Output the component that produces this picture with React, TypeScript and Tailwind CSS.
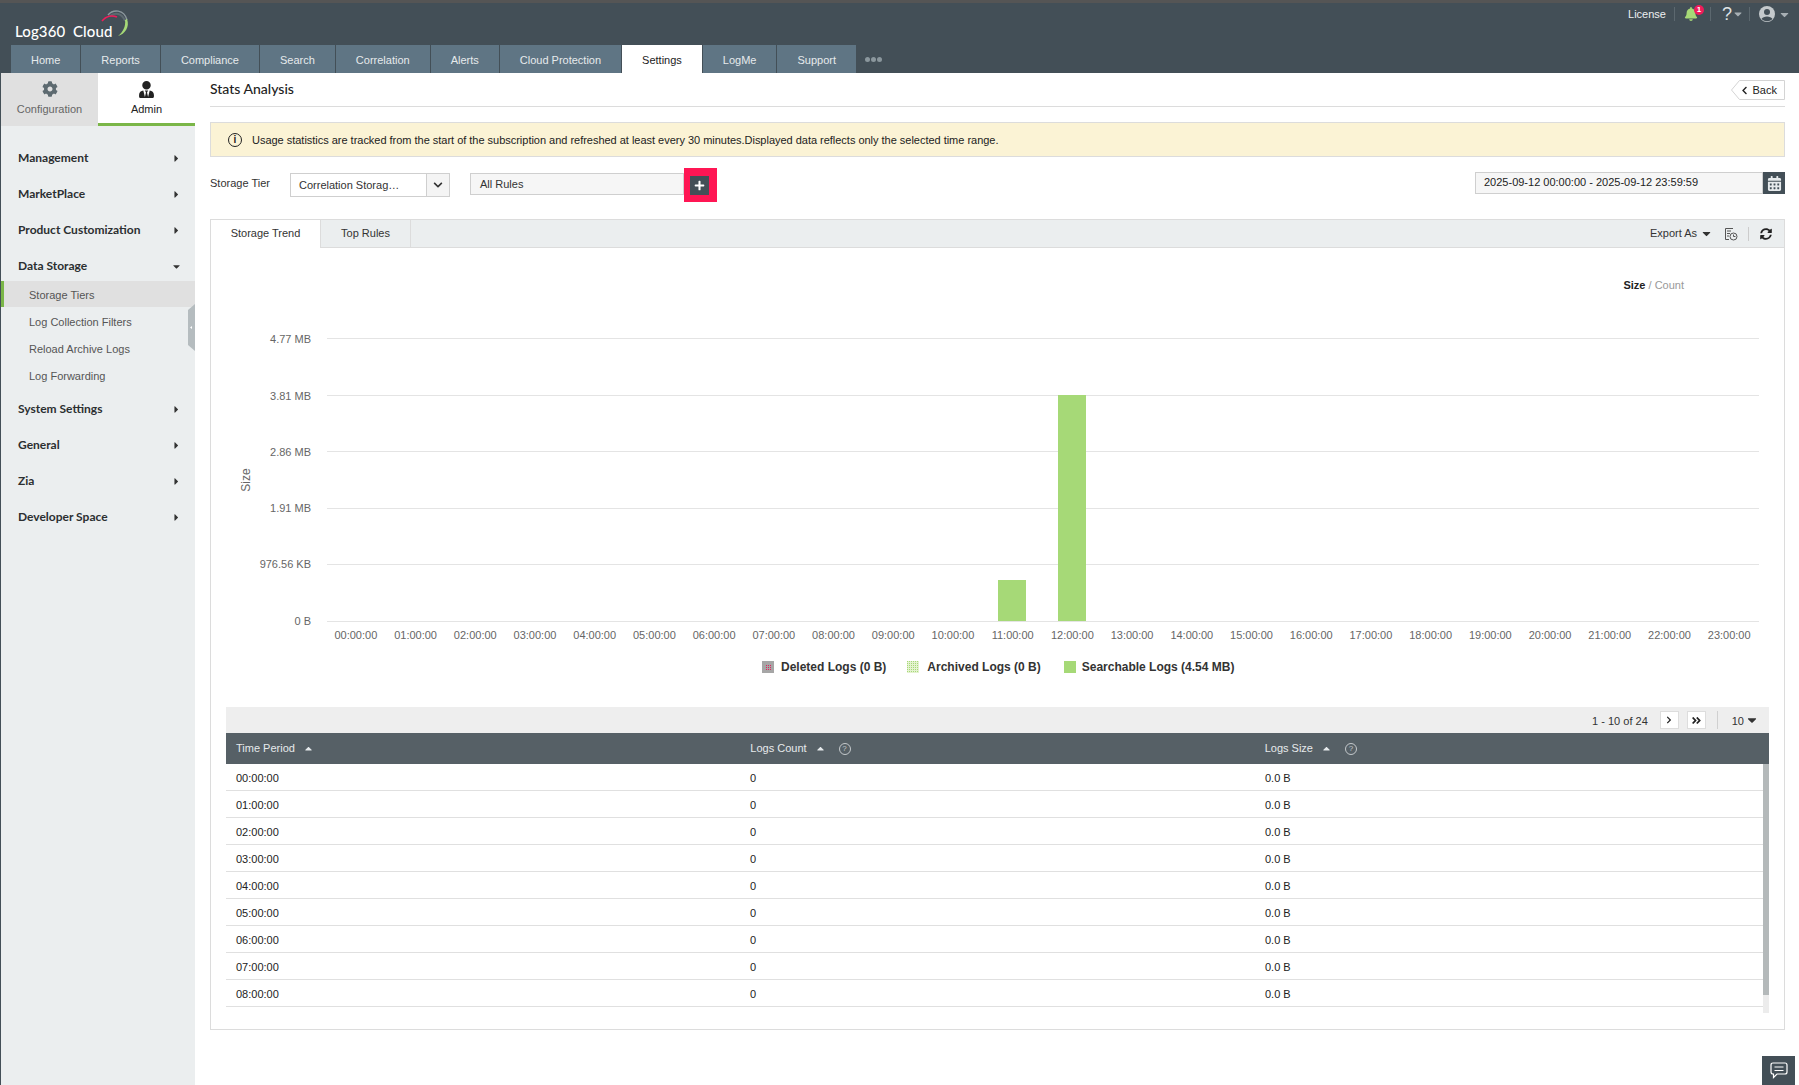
import { FaCog, FaUserTie, FaBell, FaCaretDown, FaCaretRight, FaCaretUp, FaChevronDown, FaChevronLeft, FaChevronRight, FaAngleDoubleRight, FaCalendarAlt, FaSyncAlt, FaPlus } from "react-icons/fa";

const tabs = ["Home", "Reports", "Compliance", "Search", "Correlation", "Alerts", "Cloud Protection", "Settings", "LogMe", "Support"];
const hours = Array.from({ length: 24 }, (_, i) => String(i).padStart(2, "0") + ":00:00");
const yTicks = [
  { label: "0 B", y: 329.5, dy: 3.5 },
  { label: "976.56 KB", y: 272.5, dy: 3.5 },
  { label: "1.91 MB", y: 216.5, dy: 3.5 },
  { label: "2.86 MB", y: 159.5, dy: 4.5 },
  { label: "3.81 MB", y: 103.5, dy: 4.5 },
  { label: "4.77 MB", y: 46.5, dy: 4.5 },
];
const bars = [
  { hour: 11, top: 288 },
  { hour: 12, top: 103 },
];

function NavHead({ label, open }: { label: string; open?: boolean }) {
  return (
    <div className="flex h-[36px] items-center justify-between pl-[17px] pr-[13px] text-[12px] font-bold text-[#2b2f31]">
      <span>{label}</span>
      {open ? <FaCaretDown className="text-[11px] text-[#333]" /> : <FaCaretRight className="text-[11px] text-[#333]" />}
    </div>
  );
}

function NavSub({ label, active }: { label: string; active?: boolean }) {
  return (
    <div className={"flex items-center text-[11px] text-[#555] font-['Liberation_Sans'] " + (active ? "mb-[2px] h-[26px] border-l-[3px] border-[#7ab648] bg-[#e0e0e0] pl-[25px] pt-[2px]" : "h-[27px] pl-[28px]")}>
      {label}
    </div>
  );
}

function Chart() {
  return (
    <svg width="1543" height="358" className="block font-['Liberation_Sans']">
      {yTicks.map((t) => (
        <g key={t.label}>
          <line x1="101" x2="1533" y1={t.y} y2={t.y} stroke="#e4e4e4" />
          <text x="85" y={t.y + t.dy} textAnchor="end" fontSize="11" fill="#666">{t.label}</text>
        </g>
      ))}
      <text x="24" y="188" fontSize="12" fill="#666" textAnchor="middle" transform="rotate(-90 24 188)">Size</text>
      {hours.map((h, i) => (
        <text key={h} x={100 + 59.71 * (i + 0.5)} y="347" fontSize="11" fill="#666" textAnchor="middle">{h}</text>
      ))}
      {bars.map((b) => (
        <rect key={b.hour} x={Math.round(100 + 59.67 * (b.hour + 0.5) - 14)} y={b.top} width="28" height={329 - b.top} fill="#a6d977" />
      ))}
    </svg>
  );
}

function Swatch({ kind }: { kind: "deleted" | "archived" | "searchable" }) {
  const id = "sw-" + kind;
  return (
    <svg width="12" height="12" className="block">
      {kind === "searchable" && <rect width="12" height="12" fill="#a6d977" />}
      {kind === "deleted" && (
        <>
          <rect width="12" height="12" fill="#a6a6a6" />
          <defs>
            <pattern id={id} width="2" height="2" patternUnits="userSpaceOnUse">
              <rect width="1" height="1" fill="#e0245e" />
            </pattern>
          </defs>
          <rect x="3" y="3" width="6" height="6" fill={`url(#${id})`} />
        </>
      )}
      {kind === "archived" && (
        <>
          <defs>
            <pattern id={id} width="2" height="2" patternUnits="userSpaceOnUse">
              <rect width="2" height="2" fill="#e4f2d0" />
              <rect width="1" height="1" fill="#a6d977" />
            </pattern>
          </defs>
          <rect width="12" height="12" fill={`url(#${id})`} />
        </>
      )}
    </svg>
  );
}

function Help() {
  return (
    <span className="flex h-[12px] w-[12px] items-center justify-center rounded-full border border-[#c4c9cc] text-[8px] text-[#c4c9cc]">?</span>
  );
}

export default function App() {
  return (
    <div className="flex h-screen w-full flex-col overflow-hidden bg-white font-['Liberation_Sans',sans-serif] text-[11px] text-[#333]">
      {/* Header */}
      <header className="relative h-[73px] shrink-0 border-t-[3px] border-[#555] bg-[#434f57]">
        <div className="flex h-[42px] items-start justify-between">
          <div className="relative ml-[15px] mt-[20px] flex items-center">
            <span className="font-['Lato'] text-[15px] font-medium leading-[16px] tracking-[0.1px] text-white">Log360&nbsp; Cloud</span>
            <svg width="30" height="30" viewBox="0 0 30 30" fill="none" className="absolute left-[85px] top-[-15px]">
              <path d="M8 7C13 1 24 1 27 12" stroke="#8b979d" strokeWidth="1.5" />
              <path d="M10 8C15 4 22 5 25 13" stroke="#5d6a70" strokeWidth="2" />
              <path d="M2 13C6 8 12 7 17 9" stroke="#ef1c5a" strokeWidth="1.6" />
              <path d="M27 11C30 19 25 26 18 28C23 24 26 18 25 12Z" fill="#a6d977" />
            </svg>
          </div>
          <div className="mt-[2px] flex items-center pr-[8px] text-[#eef0f1]">
            <span className="pr-[8px] text-[11px]">License</span>
            <span className="h-[14px] w-px bg-[#5c686f]" />
            <span className="relative ml-[10px] mr-[13px] flex w-[12px] justify-center">
              <FaBell className="shrink-0 text-[14px] text-[#a6d977]" />
              <span className="absolute left-[9px] top-[-2px] flex h-[10px] w-[10px] items-center justify-center rounded-full bg-[#ef1c5a] text-[8px] font-bold leading-none text-white">1</span>
            </span>
            <span className="h-[14px] w-px bg-[#5c686f]" />
            <span className="ml-[11px] flex items-center pr-[5px] text-[#dfe3e5]">
              <span className="text-[18px] leading-none">?</span>
              <FaCaretDown className="text-[12px] text-[#a7afb4]" />
            </span>
            <span className="h-[14px] w-px bg-[#5c686f]" />
            <span className="ml-[9px] flex items-center gap-[3px]">
              <svg width="16" height="16" viewBox="0 0 16 16">
                <circle cx="8" cy="8" r="8" fill="#c4c9cc" />
                <circle cx="8" cy="6" r="3" fill="#434f57" />
                <path d="M2.5 13C4 9.5 12 9.5 13.5 13C10 16 6 16 2.5 13Z" fill="#434f57" />
              </svg>
              <FaCaretDown className="text-[13px] text-[#a7afb4]" />
            </span>
          </div>
        </div>
        <nav className="flex h-[28px] items-stretch gap-px pl-[11px]">
          {tabs.map((t) => (
            <div key={t} className={"flex items-center px-5 pt-[2px] text-[11px] " + (t === "Settings" ? "bg-white text-[#222]" : "bg-[#5f7584] text-[#e6eaec]")}>{t}</div>
          ))}
          <div className="ml-[8px] flex items-center gap-[1px]">
            <span className="h-[5px] w-[5px] rounded-full bg-[#8b979d]" />
            <span className="h-[5px] w-[5px] rounded-full bg-[#8b979d]" />
            <span className="h-[5px] w-[5px] rounded-full bg-[#8b979d]" />
          </div>
        </nav>
      </header>

      <div className="flex min-h-0 flex-1">
        {/* Sidebar */}
        <aside className="relative w-[195px] shrink-0 border-l border-[#434f57] bg-[#ebeeef] font-['Lato']">
          <div className="flex h-[53px] bg-white font-['Liberation_Sans']">
            <div className="flex w-[97px] flex-col items-center bg-[#e0e0e0] pt-[8px] text-[#666]">
              <FaCog className="text-[16px] text-[#5d6a70]" />
              <span className="mt-[4px] text-[11px]">Configuration</span>
            </div>
            <div className="flex w-[97px] flex-col items-center border-b-[3px] border-[#7ab648] pt-[8px] text-[#222]">
              <FaUserTie className="text-[17px] text-[#222]" />
              <span className="mt-[3px] text-[11px]">Admin</span>
            </div>
          </div>
          <div className="pt-[14px]">
            <NavHead label="Management" />
            <NavHead label="MarketPlace" />
            <NavHead label="Product Customization" />
            <NavHead label="Data Storage" open />
            <div className="mt-[-3px] pb-[1px]">
              <NavSub label="Storage Tiers" active />
              <NavSub label="Log Collection Filters" />
              <NavSub label="Reload Archive Logs" />
              <NavSub label="Log Forwarding" />
            </div>
            <NavHead label="System Settings" />
            <NavHead label="General" />
            <NavHead label="Zia" />
            <NavHead label="Developer Space" />
          </div>
          <svg width="7" height="47" className="absolute right-0 top-[231px]">
            <path d="M7 0L0 6V41L7 47Z" fill="#b5bcbf" />
            <path d="M4 22L2 23.5L4 25Z" fill="#fff" />
          </svg>
        </aside>

        {/* Main */}
        <main className="relative min-w-0 flex-1 pl-[15px] pr-[14px]">
          <div className="flex h-[34px] items-center justify-between border-b border-[#dcdcdc]">
            <h1 className="pb-[3px] font-['Lato'] text-[14px] font-medium text-[#222]">Stats Analysis</h1>
            <div className="relative flex h-[20px] w-[54px] items-center justify-end gap-[4px] pr-[8px] pt-[1px] text-[11px] text-[#222]">
              <svg width="54" height="20" className="absolute left-0 top-0">
                <path d="M8.5 .5H53.5V19.5H8.5L.5 10Z" fill="#fff" stroke="#d4d4d4" />
              </svg>
              <FaChevronLeft className="relative text-[9px]" />
              <span className="relative">Back</span>
            </div>
          </div>

          <div className="mt-[15px] flex h-[35px] items-center border border-[#dcdcdc] bg-[#fbf3d5] pl-[17px] text-[11px] text-[#222]">
            <span className="flex h-[14px] w-[14px] items-center justify-center rounded-full border border-[#222] text-[10px] font-bold leading-none">i</span>
            <span className="ml-[10px] pt-[2px] tracking-[-0.02px]">Usage statistics are tracked from the start of the subscription and refreshed at least every 30 minutes.Displayed data reflects only the selected time range.</span>
          </div>

          <div className="mt-[11px] flex h-[34px] items-center">
            <span className="w-[80px] pb-[3px] text-[11px] text-[#333]">Storage Tier</span>
            <div className="flex h-[24px] w-[160px] items-center justify-between border border-[#cfcfcf] pl-[8px]">
              <span className="text-[11px] text-[#333]">Correlation Storag…</span>
              <span className="flex h-full w-[23px] items-center justify-center border-l border-[#cfcfcf] bg-[#f4f4f4]"><FaChevronDown className="text-[10px] text-[#333]" /></span>
            </div>
            <div className="mb-[2px] ml-[20px] flex h-[22px] w-[214px] items-center border border-[#cfcfcf] bg-[#f6f6f6] pl-[9px] text-[11px] text-[#333]">All Rules</div>
            <div className="flex h-[34px] w-[33px] items-center bg-[#ff1654] pl-[6px]">
              <span className="flex h-[19px] w-[19px] items-center justify-center bg-[#434f57] text-white"><FaPlus className="text-[11px]" /></span>
            </div>
            <div className="mb-[4px] ml-auto flex h-[22px] w-[310px] items-stretch">
              <span className="flex flex-1 items-center border border-[#cfcfcf] bg-[#f6f6f6] pb-[2px] pl-[8px] text-[11px] text-[#222]">2025-09-12 00:00:00 - 2025-09-12 23:59:59</span>
              <span className="flex w-[22px] items-center justify-center bg-[#434f57] text-[#e6eaec]"><FaCalendarAlt className="text-[15px]" /></span>
            </div>
          </div>

          <section className="mt-[17px] h-[811px] border border-[#dcdcdc]">
            <div className="flex h-[28px] items-stretch border-b border-[#dcdcdc] bg-[#ebeeef] text-[11px] text-[#333]">
              <div className="mb-[-1px] flex w-[110px] items-center justify-center border-r border-[#dcdcdc] bg-white pb-[2px]">Storage Trend</div>
              <div className="flex w-[90px] items-center justify-center border-r border-[#dcdcdc]">Top Rules</div>
              <div className="ml-auto flex items-center pr-[12px]">
                <span>Export As</span>
                <FaCaretDown className="ml-[3px] text-[13px]" />
                <svg width="14" height="14" viewBox="0 0 14 14" fill="none" stroke="#555" className="ml-[11px]">
                  <path d="M9 1.5H1.5V12.5H5M3 4H7M3 6.5H6M3 9H5" />
                  <circle cx="9.5" cy="9.5" r="3.5" />
                  <path d="M9.5 7.5V9.5H11.5" />
                </svg>
                <span className="ml-[10px] mr-[11px] h-[14px] w-px bg-[#ccc]" />
                <FaSyncAlt className="text-[12px] text-[#222]" />
              </div>
            </div>

            <div className="px-[15px]">
              <div className="h-[44px] pt-[30px] pr-[85px] text-right text-[11px] leading-[14px]">
                <span className="font-bold text-[#222]">Size</span>
                <span className="text-[#999]"> / Count</span>
              </div>
              <Chart />
              <div className="mt-[9px] mb-[32px] flex h-[16px] items-center pl-[536px] text-[12px] font-bold text-[#333]">
                <Swatch kind="deleted" />
                <span className="ml-[7px]">Deleted Logs (0 B)</span>
                <span className="ml-[21px]"><Swatch kind="archived" /></span>
                <span className="ml-[8px]">Archived Logs (0 B)</span>
                <span className="ml-[23px]"><Swatch kind="searchable" /></span>
                <span className="ml-[6px]">Searchable Logs (4.54 MB)</span>
              </div>

              <div className="flex h-[26px] items-center justify-end bg-[#eeeeee] pr-[10px] text-[11px] text-[#333]">
                <span className="pt-[2px]">1 - 10 of 24</span>
                <span className="ml-[12px] flex h-[18px] w-[19px] items-center justify-center border border-[#ddd] bg-white"><FaChevronRight className="text-[8px] text-[#222]" /></span>
                <span className="ml-[8px] flex h-[18px] w-[19px] items-center justify-center border border-[#ddd] bg-white"><FaAngleDoubleRight className="text-[11px] text-[#222]" /></span>
                <span className="ml-[11px] mr-[14px] h-[18px] w-px bg-[#d0d0d0]" />
                <span className="pt-[2px]">10</span>
                <FaCaretDown className="ml-[1px] text-[14px]" />
              </div>
              <div className="grid h-[31px] grid-cols-3 items-center bg-[#566066] text-[11px] text-[#e6eaec]">
                {["Time Period", "Logs Count", "Logs Size"].map((h, i) => (
                  <div key={h} className="flex items-center pl-[10px]">
                    <span>{h}</span>
                    <FaCaretUp className="ml-[8px] text-[11px]" />
                    {i > 0 && <span className="ml-[13px]"><Help /></span>}
                  </div>
                ))}
              </div>
              <div className="flex h-[249px]">
                <div className="min-w-0 flex-1">
                  {hours.slice(0, 9).map((h) => (
                    <div key={h} className="grid h-[27px] grid-cols-[514px_515px_1fr] items-center border-b border-[#e0e0e0] pt-[2px] text-[11px] text-[#222]">
                      <span className="pl-[10px]">{h}</span>
                      <span className="pl-[10px]">0</span>
                      <span className="pl-[10px]">0.0 B</span>
                    </div>
                  ))}
                </div>
                <div className="w-[6px] bg-[#ececec]">
                  <div className="h-[231px] bg-[#b4b9ba]" />
                </div>
              </div>
            </div>
          </section>

          <div className="absolute bottom-0 right-[4px] flex h-[29px] w-[33px] items-center justify-center bg-[#434f57]">
            <svg width="18" height="17" viewBox="0 0 18 17" fill="none" stroke="#fff" strokeWidth="1.2">
              <path d="M3 1H15Q17 1 17 3V10Q17 12 15 12H7L3.5 15.5V12H3Q1 12 1 10V3Q1 1 3 1Z" />
              <path d="M4.5 5H13.5M4.5 8.5H13.5" />
            </svg>
          </div>
        </main>
      </div>
    </div>
  );
}
